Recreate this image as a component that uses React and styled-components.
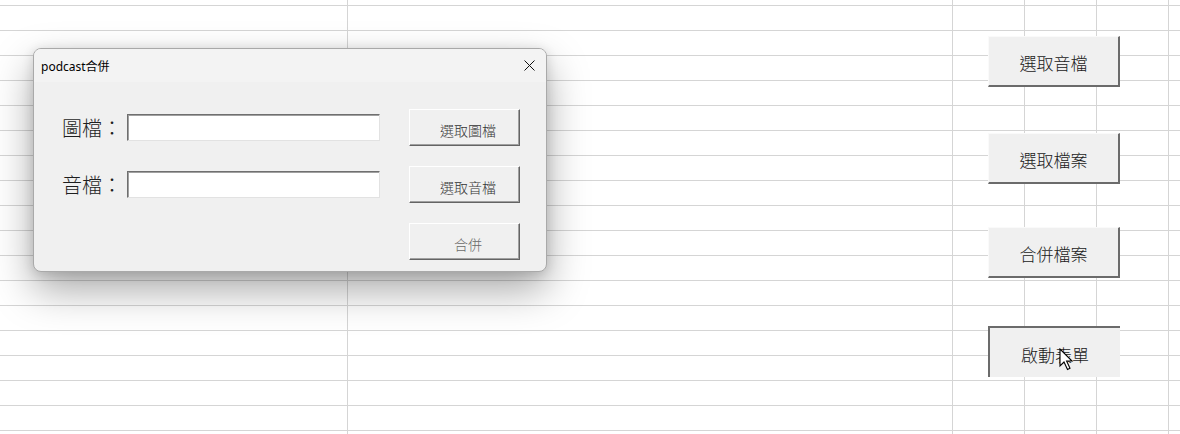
import React from "react";
import styled, { createGlobalStyle, css } from "styled-components";

const GlobalStyle = createGlobalStyle`
  html, body { margin: 0; padding: 0; background: #ffffff; }
  body {
    font-family: "Noto Sans", "Noto Sans CJK TC", sans-serif;
    overflow: hidden;
  }
  * { box-sizing: border-box; }
`;

const cjk = `"Noto Sans CJK TC", "Noto Sans", sans-serif`;

const Sheet = styled.div`
  position: relative;
  width: 1180px;
  height: 434px;
  overflow: hidden;
  display: grid;
  grid-template-columns: 348px 605px 72px 72px 72px 1fr;
  background-color: #ffffff;
  background-image: linear-gradient(to bottom, #d5d5d5 1px, transparent 1px);
  background-size: 100% 25px;
  background-position: 0 5px;
`;

const Column = styled.div`
  border-right: 1px solid #d5d5d5;
`;

const Dialog = styled.div`
  position: absolute;
  left: 33px;
  top: 48px;
  width: 514px;
  height: 224px;
  border: 1px solid #a9a9a9;
  border-radius: 8px;
  background: #f0f0f0;
  overflow: hidden;
  box-shadow: 0 18px 40px rgba(0, 0, 0, 0.34), 0 2px 12px rgba(0, 0, 0, 0.14);
  display: flex;
  flex-direction: column;
`;

const TitleBar = styled.div`
  height: 33px;
  flex: none;
  background: #f3f3f3;
  display: flex;
  align-items: center;
  justify-content: space-between;
  padding: 0 11px 0 7px;
  font-family: "Noto Sans", "Noto Sans CJK TC", sans-serif;
  font-size: 12px;
  color: #000;
`;

const CloseButton = styled.button`
  border: none;
  background: transparent;
  padding: 0;
  width: 11px;
  height: 11px;
  display: flex;
  align-items: center;
  justify-content: center;
`;

const FormGrid = styled.div`
  display: grid;
  grid-template-columns: 65px 282px 111px;
  grid-auto-rows: 37px;
  row-gap: 20px;
  align-items: center;
  padding: 27px 0 0 28px;
`;

const Label = styled.label`
  font-family: ${cjk};
  font-size: 20px;
  font-weight: 300;
  line-height: 1;
  color: #1e1e1e;
  white-space: nowrap;
`;

const TextBox = styled.input`
  width: 253px;
  height: 27px;
  background: #ffffff;
  border: 1px solid;
  border-color: #6f6f6f #e2e2e2 #e2e2e2 #6f6f6f;
  box-shadow: inset 1px 1px 0 #a0a0a0;
  outline: none;
  padding: 0 4px;
  font-family: ${cjk};
  font-size: 13px;
`;

const DialogButton = styled.button`
  grid-column: 3;
  width: 111px;
  height: 37px;
  background: #f0f0f0;
  border: 1px solid;
  border-color: #ffffff #646464 #646464 #ffffff;
  box-shadow: inset -1px -1px 0 #a0a0a0;
  font-family: ${cjk};
  font-size: 14px;
  font-weight: 300;
  color: ${(p) => (p.$muted ? "#6a6a6a" : "#333333")};
  padding: 4px 0 0 7px;
  line-height: 1;
`;

const SheetButton = styled.button`
  position: absolute;
  left: 988px;
  top: ${(p) => p.$top}px;
  width: 132px;
  height: 51px;
  background: #f0f0f0;
  font-family: ${cjk};
  font-size: 17px;
  font-weight: 300;
  color: #1a1a1a;
  line-height: 1;
  padding: 3px 0 0 0;
  border: none;
  ${(p) =>
    p.$pressed
      ? css`
          border-top: 2px solid #6b6b6b;
          border-left: 2px solid #6b6b6b;
        `
      : css`
          border-top: 1px solid #fafafa;
          border-left: 1px solid #fafafa;
          border-right: 2px solid #6b6b6b;
          border-bottom: 2px solid #6b6b6b;
        `}
`;

const Cursor = styled.svg`
  position: absolute;
  left: 1059px;
  top: 348px;
  pointer-events: none;
`;

export default function App() {
  return (
    <>
      <GlobalStyle />
      <Sheet>
        <Column />
        <Column />
        <Column />
        <Column />
        <Column />
        <div />

        <Dialog>
          <TitleBar>
            <span>podcast合併</span>
            <CloseButton aria-label="close">
              <svg width="11" height="11" viewBox="0 0 11 11">
                <path d="M0.5 0.5 L10.5 10.5 M10.5 0.5 L0.5 10.5" stroke="#111" strokeWidth="1" fill="none" />
              </svg>
            </CloseButton>
          </TitleBar>
          <FormGrid>
            <Label>圖檔：</Label>
            <TextBox />
            <DialogButton>選取圖檔</DialogButton>
            <Label>音檔：</Label>
            <TextBox />
            <DialogButton>選取音檔</DialogButton>
            <DialogButton $muted>合併</DialogButton>
          </FormGrid>
        </Dialog>

        <SheetButton $top={36}>選取音檔</SheetButton>
        <SheetButton $top={133}>選取檔案</SheetButton>
        <SheetButton $top={227}>合併檔案</SheetButton>
        <SheetButton $top={326} $pressed>啟動表單</SheetButton>

        <Cursor width="15" height="23" viewBox="0 0 15 23">
          <path
            d="M1 1 L1 18 L5 14 L8.5 21.5 L11 20.3 L7.6 13 L13 13 Z"
            fill="#ffffff"
            stroke="#000000"
            strokeWidth="1.1"
            strokeLinejoin="miter"
          />
        </Cursor>
      </Sheet>
    </>
  );
}
